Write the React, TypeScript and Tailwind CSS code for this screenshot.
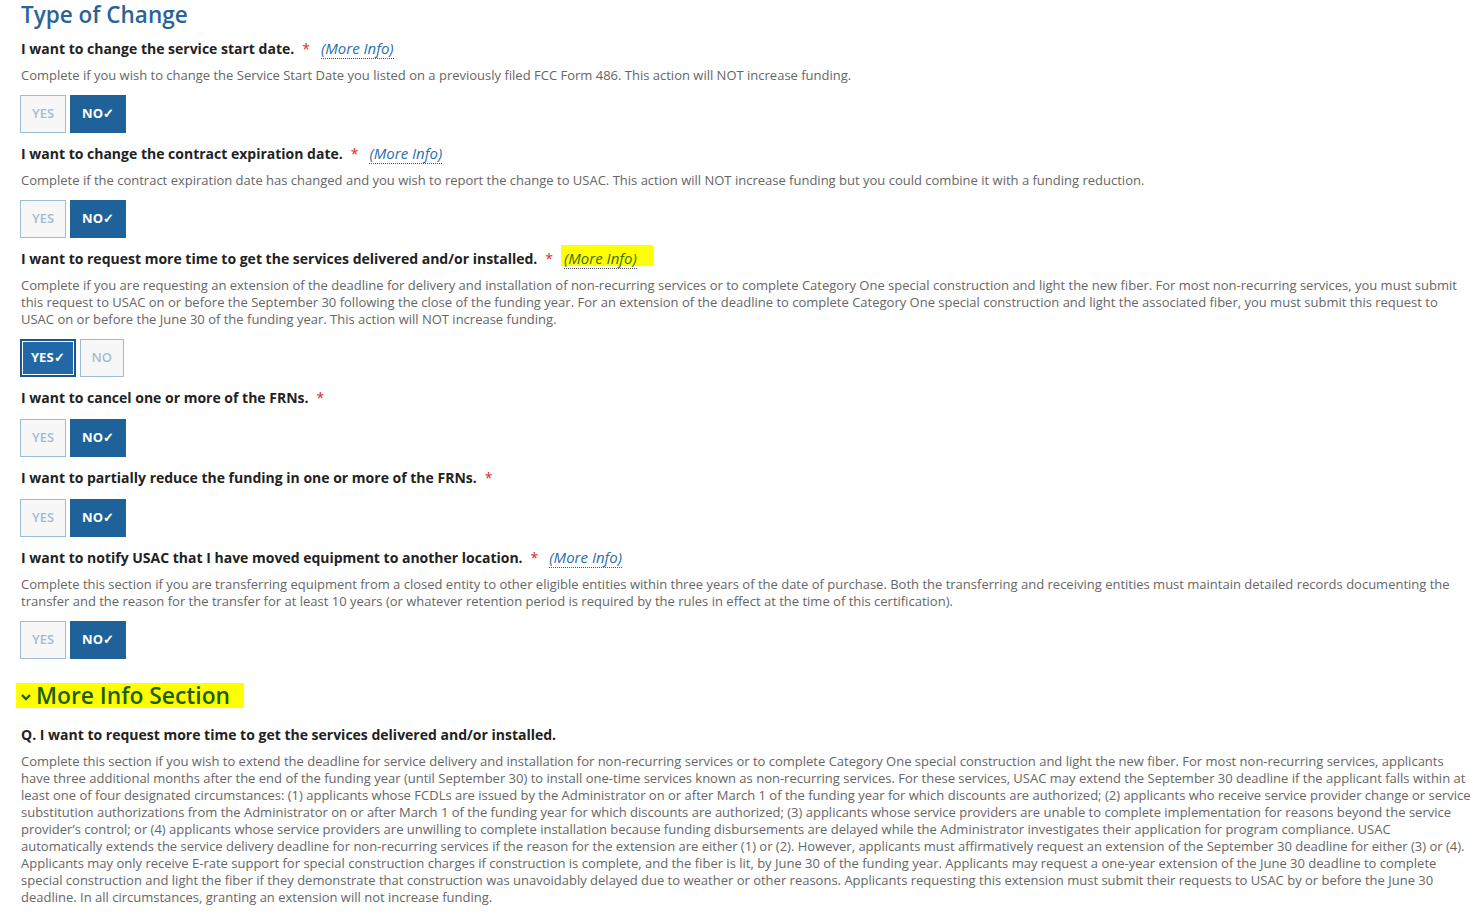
import React, { useState } from "react";

type Question = {
  label: string;
  moreInfo?: boolean;
  highlight?: boolean;
  desc?: string;
  value: boolean;
};

const questions: Question[] = [
  {
    label: "I want to change the service start date.",
    moreInfo: true,
    desc: "Complete if you wish to change the Service Start Date you listed on a previously filed FCC Form 486. This action will NOT increase funding.",
    value: false,
  },
  {
    label: "I want to change the contract expiration date.",
    moreInfo: true,
    desc: "Complete if the contract expiration date has changed and you wish to report the change to USAC. This action will NOT increase funding but you could combine it with a funding reduction.",
    value: false,
  },
  {
    label: "I want to request more time to get the services delivered and/or installed.",
    moreInfo: true,
    highlight: true,
    desc: "Complete if you are requesting an extension of the deadline for delivery and installation of non-recurring services or to complete Category One special construction and light the new fiber. For most non-recurring services, you must submit this request to USAC on or before the September 30 following the close of the funding year. For an extension of the deadline to complete Category One special construction and light the associated fiber, you must submit this request to USAC on or before the June 30 of the funding year. This action will NOT increase funding.",
    value: true,
  },
  {
    label: "I want to cancel one or more of the FRNs.",
    value: false,
  },
  {
    label: "I want to partially reduce the funding in one or more of the FRNs.",
    value: false,
  },
  {
    label: "I want to notify USAC that I have moved equipment to another location.",
    moreInfo: true,
    desc: "Complete this section if you are transferring equipment from a closed entity to other eligible entities within three years of the date of purchase. Both the transferring and receiving entities must maintain detailed records documenting the transfer and the reason for the transfer for at least 10 years (or whatever retention period is required by the rules in effect at the time of this certification).",
    value: false,
  },
];

const moreInfoText =
  "Complete this section if you wish to extend the deadline for service delivery and installation for non-recurring services or to complete Category One special construction and light the new fiber. For most non-recurring services, applicants have three additional months after the end of the funding year (until September 30) to install one-time services known as non-recurring services. For these services, USAC may extend the September 30 deadline if the applicant falls within at least one of four designated circumstances: (1) applicants whose FCDLs are issued by the Administrator on or after March 1 of the funding year for which discounts are authorized; (2) applicants who receive service provider change or service substitution authorizations from the Administrator on or after March 1 of the funding year for which discounts are authorized; (3) applicants whose service providers are unable to complete implementation for reasons beyond the service provider\u2019s control; or (4) applicants whose service providers are unwilling to complete installation because funding disbursements are delayed while the Administrator investigates their application for program compliance. USAC automatically extends the service delivery deadline for non-recurring services if the reason for the extension are either (1) or (2). However, applicants must affirmatively request an extension of the September 30 deadline for either (3) or (4). Applicants may only receive E-rate support for special construction charges if construction is complete, and the fiber is lit, by June 30 of the funding year. Applicants may request a one-year extension of the June 30 deadline to complete special construction and light the fiber if they demonstrate that construction was unavoidably delayed due to weather or other reasons. Applicants requesting this extension must submit their requests to USAC by or before the June 30 deadline. In all circumstances, granting an extension will not increase funding.";

const YesNo = ({ value, onChange }: { value: boolean; onChange: (v: boolean) => void }) => {
  const on = "bg-[#1f6199] text-white border-[#1f6199] font-bold px-[11px]";
  const off = "bg-[#f7f7f7] text-[#a3bbd0] border-[#9dbdd6] font-semibold";
  return (
    <div className="-ml-px flex gap-1">
      <button
        onClick={() => onChange(true)}
        className={
          "h-[38px] text-[13px] " +
          (value
            ? "bg-[#2268a6] text-white font-bold border-2 border-[#1a5690] outline outline-1 outline-white -outline-offset-[3px] px-[9px]"
            : "border px-[11px] " + off)
        }
      >
        {value ? "YES\u2713" : "YES"}
      </button>
      <button
        onClick={() => onChange(false)}
        className={"h-[38px] border text-[13px] " + (!value ? on : "px-[11px] " + off)}
      >
        {!value ? "NO\u2713" : "NO"}
      </button>
    </div>
  );
};

const MoreInfo = ({ highlight }: { highlight?: boolean }) =>
  highlight ? (
    <span className="relative ml-[11px] inline-block font-normal text-[15px] leading-[14px]">
      <span className="absolute -left-[3px] -right-[16px] -top-[6px] -bottom-[1px] bg-[#ffff00]" />
      <a href="#" className="relative italic text-[#3d6b0c] border-b border-dotted border-[#555]">
        (More Info)
      </a>
    </span>
  ) : (
    <a href="#" className="ml-[11px] italic font-normal text-[15px] leading-[14px] text-[#2a6ead] border-b border-dotted border-[#555]">
      (More Info)
    </a>
  );

export default function App() {
  const [values, setValues] = useState(questions.map((q) => q.value));

  return (
    <div className="pl-[21px] pr-[12px] bg-white text-[#333] font-['Open_Sans',sans-serif]">
      <h2 className="text-[22.5px] leading-[30px] font-semibold text-[#2a6496]">Type of Change</h2>
      <div className="mt-[9px]">
        {questions.map((q, i) => (
          <div key={i} className="mb-[11px]">
            <div className={"text-[14px] leading-[20px] font-bold text-[#222] " + (q.desc ? "mb-[8px]" : "mb-[11px]")}>
              {q.label}
              <span className="ml-[8px] text-[#e0261b] font-normal">*</span>
              {q.moreInfo && <MoreInfo highlight={q.highlight} />}
            </div>
            {q.desc && <p className="text-[13px] leading-[17px] text-[#666] mb-[11px]">{q.desc}</p>}
            <YesNo
              value={values[i]}
              onChange={(v) => setValues(values.map((x, j) => (j === i ? v : x)))}
            />
          </div>
        ))}
      </div>

      <div className="mt-[24px]">
        <h3 className="-ml-[5px] inline-flex items-center bg-[#ffff00] pl-[4px] pr-[14px] text-[22.8px] leading-[25px] font-semibold text-[#1e5e0a]">
          <svg width="12" height="12" viewBox="0 0 12 12" className="mr-[4px] mt-[3px]">
            <path d="M2 4 L6 8 L10 4" stroke="#1e5e0a" strokeWidth="2.4" fill="none" />
          </svg>
          More Info Section
        </h3>
        <div className="mt-[16px] text-[14px] leading-[20px] font-bold text-[#222]">
          Q. I want to request more time to get the services delivered and/or installed.
        </div>
        <p className="mt-[8px] text-[13px] leading-[17px] text-[#666]">{moreInfoText}</p>
      </div>
    </div>
  );
}
